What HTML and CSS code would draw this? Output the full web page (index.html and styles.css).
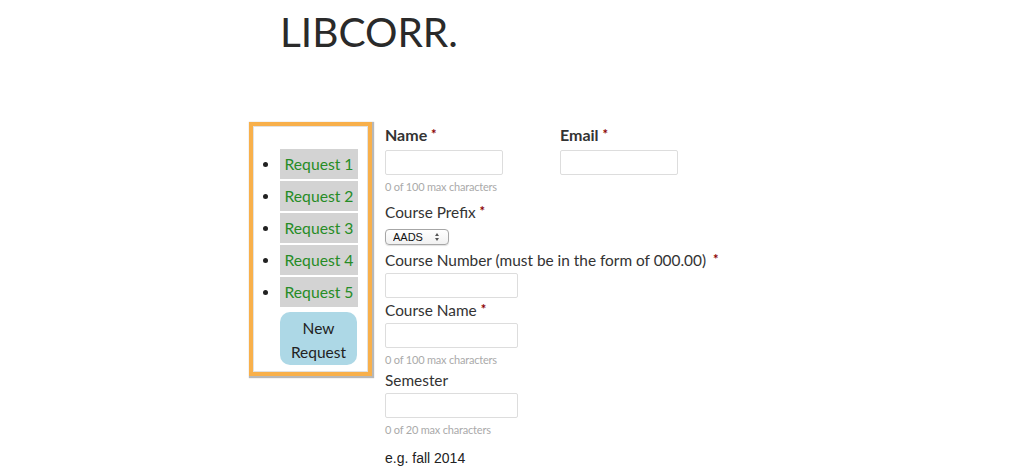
FILE: index.html
```html
<!DOCTYPE html>
<html>
<head>
<meta charset="utf-8">
<link rel="stylesheet" href="styles.css">
</head>
<body>
<header class="site-header">
  <h1 class="logo">LIBCORR.</h1>
</header>
<main class="main">
  <aside class="sidebar">
    <div class="sidebar-inner">
      <ul class="requests">
        <li><a class="request">Request 1</a></li>
        <li><a class="request">Request 2</a></li>
        <li><a class="request">Request 3</a></li>
        <li><a class="request">Request 4</a></li>
        <li><a class="request">Request 5</a></li>
      </ul>
      <button class="new-request">New<br>Request</button>
    </div>
  </aside>
  <form class="form">
    <div class="row">
      <div class="field name-field">
        <label class="label bold">Name <span class="req">*</span></label>
        <input class="input short" type="text">
        <div class="help">0 of 100 max characters</div>
      </div>
      <div class="field">
        <label class="label bold">Email <span class="req">*</span></label>
        <input class="input short" type="text">
      </div>
    </div>
    <label class="label prefix-label">Course Prefix <span class="req">*</span></label>
    <span class="select-wrap">
      <select class="select"><option>AADS</option></select>
    </span>
    <label class="label number-label">Course Number (must be in the form of 000.00) <span class="req wide">*</span></label>
    <input class="input long gap3" type="text">
    <label class="label cname-label">Course Name <span class="req">*</span></label>
    <input class="input long gap3" type="text">
    <div class="help">0 of 100 max characters</div>
    <label class="label sem-label">Semester</label>
    <input class="input long gap3" type="text">
    <div class="help">0 of 20 max characters</div>
    <div class="example">e.g. fall 2014</div>
  </form>
</main>
</body>
</html>
```

FILE: styles.css
```css
* { box-sizing: border-box; }
html, body { margin: 0; padding: 0; background: #fff; }
body {
  font-family: Lato, "Open Sans", sans-serif;
  color: #333;
  width: 1034px;
  height: 471px;
  overflow: hidden;
}
.site-header { padding: 8px 0 0 280px; }
.logo {
  margin: 0;
  font-family: Lato, sans-serif;
  font-weight: 400;
  font-size: 40.6px;
  line-height: 48px;
  color: #2a2a2a;
  letter-spacing: 0;
}
.main {
  display: flex;
  align-items: flex-start;
  gap: 13px;
  margin: 66px 0 0 249px;
}
.sidebar {
  width: 123px;
  height: 254px;
  border: 4px solid #f8b04b;
  box-shadow: 1px 1px 1px 1px #b8b8b8;
}
.sidebar-inner {
  height: 100%;
  border: 1px solid #e2e2e2;
  padding: 22px 0 0 0;
}
.requests {
  margin: 0;
  padding: 0 0 0 26px;
  list-style: disc;
  color: #222;
  font-size: 15px;
}
.requests li { margin-bottom: 2px; }
.request {
  display: block;
  width: 78px;
  height: 30px;
  line-height: 31px;
  background: #d3d3d3;
  color: #268c26;
  font-size: 15.7px;
  text-align: center;
}
.new-request {
  display: block;
  margin: 5px 0 0 26px;
  width: 77px;
  height: 53px;
  border: 0;
  border-radius: 10px;
  background: #add8e6;
  font-family: Lato, sans-serif;
  font-size: 15.5px;
  line-height: 24px;
  color: #222;
  padding: 3px 0 0;
}
.form { padding-top: 2px; width: 400px; }
.row { display: flex; }
.name-field { width: 175px; }
.label {
  display: block;
  font-size: 15.4px;
  line-height: 20px;
  color: #333;
}
.bold { font-weight: 700; font-size: 16px; }
.req { color: #8b0000; font-size: 13px; vertical-align: 2px; font-weight: 700; }
.req.wide { margin-left: 3px; }
.input {
  display: block;
  height: 25px;
  border: 1px solid #ddd;
  border-radius: 2px;
  background: #fff;
  margin-top: 5px;
  padding: 0 4px;
}
.short { width: 118px; }
.long { width: 133px; }
.gap3 { margin-top: 3px; }
.help {
  font-size: 11px;
  line-height: 14px;
  color: #aaa;
  margin-top: 5px;
  letter-spacing: -0.2px;
}
.prefix-label { margin-top: 7px; }
.select-wrap {
  display: block;
  position: relative;
  width: 64px;
  margin-top: 7px;
}
.select {
  -webkit-appearance: none;
  appearance: none;
  display: block;
  width: 64px;
  height: 16px;
  border: 1px solid #a6a6a6;
  border-radius: 4px;
  background: linear-gradient(#fff, #f1f1f1);
  font-family: "Liberation Sans", Arial, sans-serif;
  font-size: 11px;
  line-height: 14px;
  padding: 0 0 0 7px;
  color: #111;
  box-shadow: 0 1px 1px rgba(0,0,0,0.12);
}
.select-wrap::before,
.select-wrap::after {
  content: "";
  position: absolute;
  right: 10px;
  width: 0;
  height: 0;
  border-left: 2.5px solid transparent;
  border-right: 2.5px solid transparent;
}
.select-wrap::before { top: 4px; border-bottom: 3px solid #555; }
.select-wrap::after { top: 9px; border-top: 3px solid #555; }
.number-label { margin-top: 4px; }
.cname-label { margin-top: 1px; }
.sem-label { margin-top: 3px; }
.example {
  margin-top: 11px;
  font-family: "Liberation Sans", Arial, sans-serif;
  font-size: 14px;
  line-height: 20px;
  color: #222;
}
```
